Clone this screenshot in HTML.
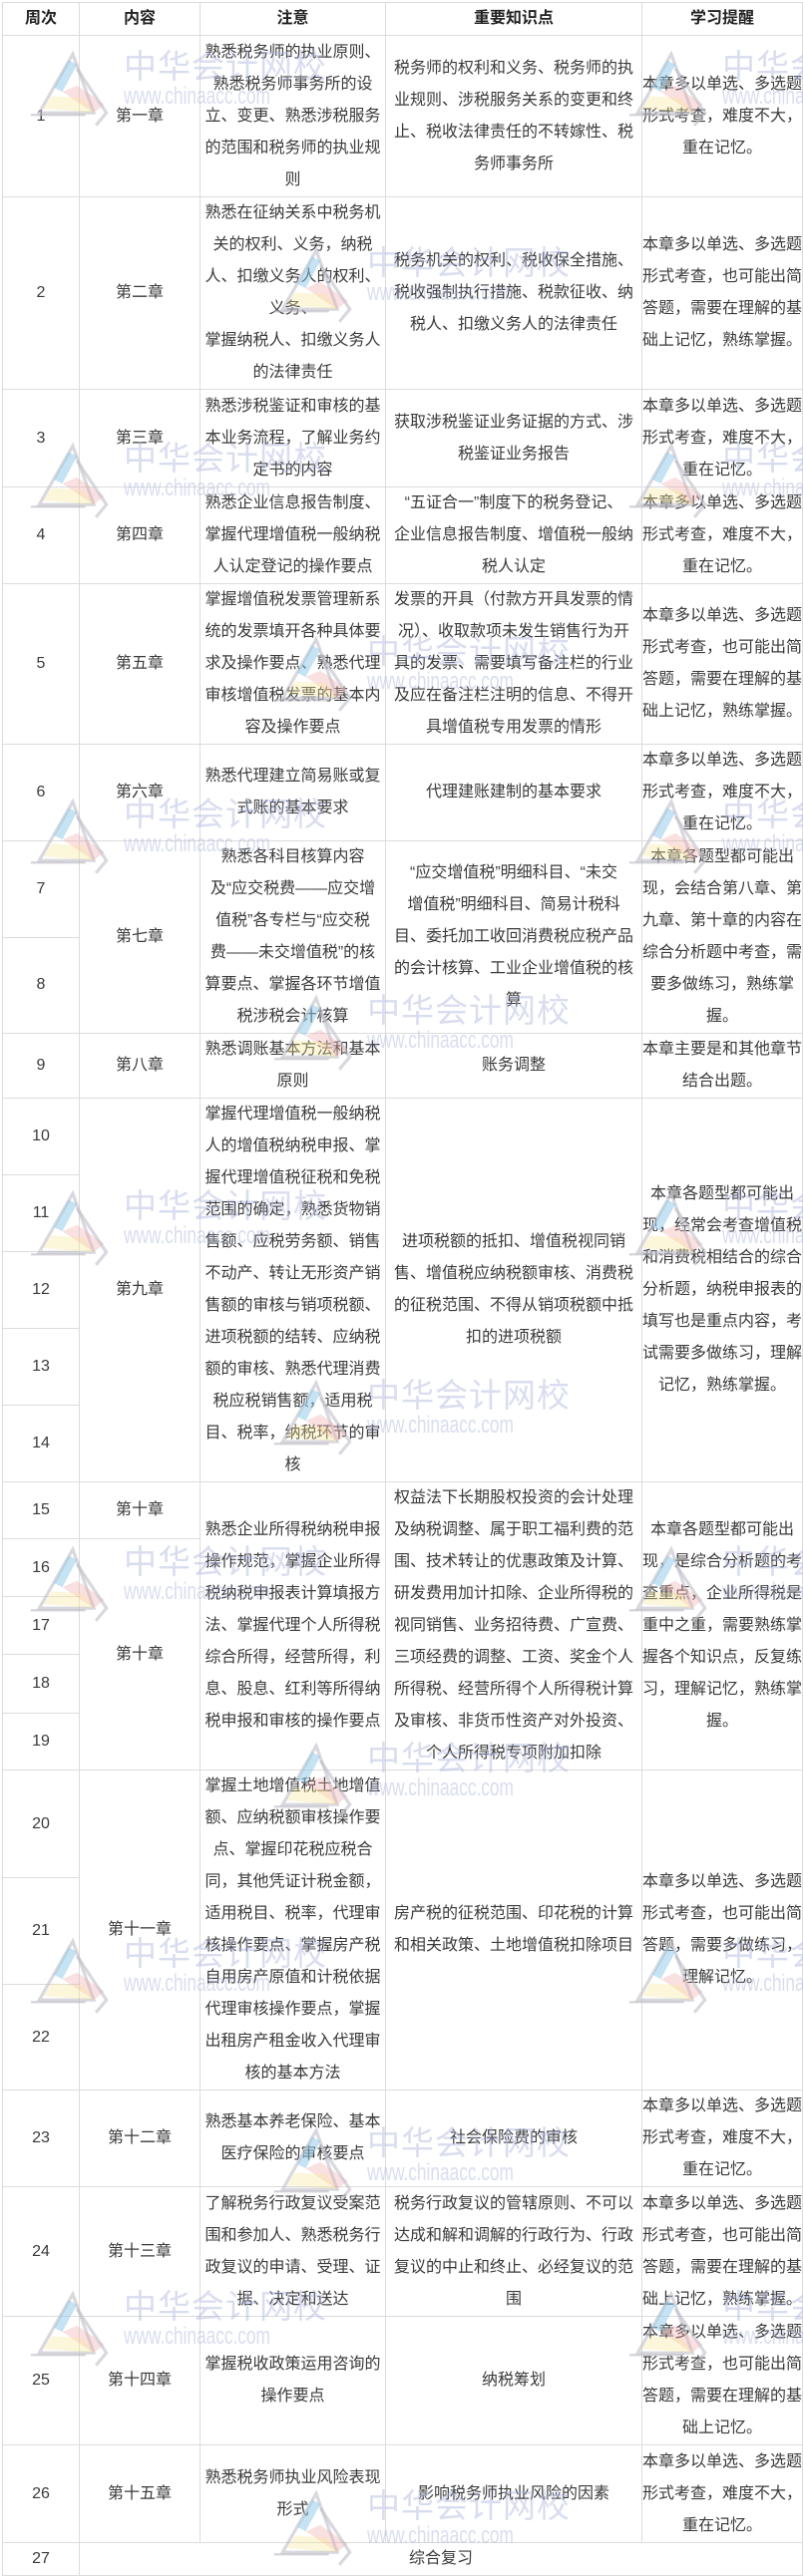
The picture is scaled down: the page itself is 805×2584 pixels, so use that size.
<!DOCTYPE html>
<html><head><meta charset="utf-8">
<style>
html,body{margin:0;padding:0;background:#fff;}
body{width:805px;height:2582px;position:relative;overflow:hidden;font-family:"Liberation Sans","Noto Sans CJK SC",sans-serif;}
table{position:absolute;left:2px;top:2px;width:802px;border-collapse:collapse;table-layout:fixed;color:#3a3a3a;font-size:16px;}
td,th{border:1px solid #dcdcdc;padding:0;text-align:center;vertical-align:middle;line-height:32px;white-space:nowrap;overflow:hidden;}
th{font-weight:bold;color:#222;}
.wm{position:absolute;width:320px;height:80px;pointer-events:none;z-index:5;}
.wm .t{position:absolute;left:96px;top:-4px;font-size:33px;line-height:36px;color:rgba(170,180,220,0.45);letter-spacing:1px;white-space:nowrap;font-family:"Noto Sans CJK SC",sans-serif;}
.wm .u{position:absolute;left:96px;top:34px;font-size:24px;line-height:26px;color:rgba(170,180,220,0.45);white-space:nowrap;transform:scaleX(0.72);transform-origin:left top;font-family:"Liberation Sans",sans-serif;}
.wm svg{position:absolute;left:-96px;top:0;}
</style></head><body>
<table>
<colgroup><col style="width:77px"><col style="width:121px"><col style="width:186px"><col style="width:257px"><col style="width:161px"></colgroup>
<tr style="height:33px"><th>周次</th><th>内容</th><th>注意</th><th>重要知识点</th><th>学习提醒</th></tr>
<tr style="height:162px"><td>1</td><td>第一章</td><td>熟悉税务师的执业原则、<br>熟悉税务师事务所的设<br>立、变更、熟悉涉税服务<br>的范围和税务师的执业规<br>则</td><td>税务师的权利和义务、税务师的执<br>业规则、涉税服务关系的变更和终<br>止、税收法律责任的不转嫁性、税<br>务师事务所</td><td>本章多以单选、多选题<br>形式考查，难度不大，<br>重在记忆。</td></tr>
<tr style="height:192px"><td>2</td><td>第二章</td><td>熟悉在征纳关系中税务机<br>关的权利、义务，纳税<br>人、扣缴义务人的权利、<br>义务、<br>掌握纳税人、扣缴义务人<br>的法律责任</td><td>税务机关的权利、税收保全措施、<br>税收强制执行措施、税款征收、纳<br>税人、扣缴义务人的法律责任</td><td>本章多以单选、多选题<br>形式考查，也可能出简<br>答题，需要在理解的基<br>础上记忆，熟练掌握。</td></tr>
<tr style="height:98px"><td>3</td><td>第三章</td><td>熟悉涉税鉴证和审核的基<br>本业务流程，了解业务约<br>定书的内容</td><td>获取涉税鉴证业务证据的方式、涉<br>税鉴证业务报告</td><td>本章多以单选、多选题<br>形式考查，难度不大，<br>重在记忆。</td></tr>
<tr style="height:96px"><td>4</td><td>第四章</td><td>熟悉企业信息报告制度、<br>掌握代理增值税一般纳税<br>人认定登记的操作要点</td><td>“五证合一”制度下的税务登记、<br>企业信息报告制度、增值税一般纳<br>税人认定</td><td>本章多以单选、多选题<br>形式考查，难度不大，<br>重在记忆。</td></tr>
<tr style="height:161px"><td>5</td><td>第五章</td><td>掌握增值税发票管理新系<br>统的发票填开各种具体要<br>求及操作要点、熟悉代理<br>审核增值税发票的基本内<br>容及操作要点</td><td>发票的开具（付款方开具发票的情<br>况）、收取款项未发生销售行为开<br>具的发票、需要填写备注栏的行业<br>及应在备注栏注明的信息、不得开<br>具增值税专用发票的情形</td><td>本章多以单选、多选题<br>形式考查，也可能出简<br>答题，需要在理解的基<br>础上记忆，熟练掌握。</td></tr>
<tr style="height:97px"><td>6</td><td>第六章</td><td>熟悉代理建立简易账或复<br>式账的基本要求</td><td>代理建账建制的基本要求</td><td>本章多以单选、多选题<br>形式考查，难度不大，<br>重在记忆。</td></tr>
<tr style="height:96px"><td>7</td><td rowspan="2">第七章</td><td rowspan="2">熟悉各科目核算内容<br>及“应交税费——应交增<br>值税”各专栏与“应交税<br>费——未交增值税”的核<br>算要点、掌握各环节增值<br>税涉税会计核算</td><td rowspan="2">“应交增值税”明细科目、“未交<br>增值税”明细科目、简易计税科<br>目、委托加工收回消费税应税产品<br>的会计核算、工业企业增值税的核<br>算</td><td rowspan="2">本章各题型都可能出<br>现，会结合第八章、第<br>九章、第十章的内容在<br>综合分析题中考查，需<br>要多做练习，熟练掌<br>握。</td></tr>
<tr style="height:96px"><td>8</td></tr>
<tr style="height:65px"><td>9</td><td>第八章</td><td>熟悉调账基本方法和基本<br>原则</td><td>账务调整</td><td>本章主要是和其他章节<br>结合出题。</td></tr>
<tr style="height:77px"><td>10</td><td rowspan="5">第九章</td><td rowspan="5">掌握代理增值税一般纳税<br>人的增值税纳税申报、掌<br>握代理增值税征税和免税<br>范围的确定，熟悉货物销<br>售额、应税劳务额、销售<br>不动产、转让无形资产销<br>售额的审核与销项税额、<br>进项税额的结转、应纳税<br>额的审核、熟悉代理消费<br>税应税销售额，适用税<br>目、税率，纳税环节的审<br>核</td><td rowspan="5">进项税额的抵扣、增值税视同销<br>售、增值税应纳税额审核、消费税<br>的征税范围、不得从销项税额中抵<br>扣的进项税额</td><td rowspan="5">本章各题型都可能出<br>现，经常会考查增值税<br>和消费税相结合的综合<br>分析题，纳税申报表的<br>填写也是重点内容，考<br>试需要多做练习，理解<br>记忆，熟练掌握。</td></tr>
<tr style="height:77px"><td>11</td></tr>
<tr style="height:77px"><td>12</td></tr>
<tr style="height:77px"><td>13</td></tr>
<tr style="height:77px"><td>14</td></tr>
<tr style="height:57px"><td>15</td><td>第十章</td><td rowspan="5">熟悉企业所得税纳税申报<br>操作规范，掌握企业所得<br>税纳税申报表计算填报方<br>法、掌握代理个人所得税<br>综合所得，经营所得，利<br>息、股息、红利等所得纳<br>税申报和审核的操作要点</td><td rowspan="5">权益法下长期股权投资的会计处理<br>及纳税调整、属于职工福利费的范<br>围、技术转让的优惠政策及计算、<br>研发费用加计扣除、企业所得税的<br>视同销售、业务招待费、广宣费、<br>三项经费的调整、工资、奖金个人<br>所得税、经营所得个人所得税计算<br>及审核、非货币性资产对外投资、<br>个人所得税专项附加扣除</td><td rowspan="5">本章各题型都可能出<br>现，是综合分析题的考<br>查重点，企业所得税是<br>重中之重，需要熟练掌<br>握各个知识点，反复练<br>习，理解记忆，熟练掌<br>握。</td></tr>
<tr style="height:58px"><td>16</td><td rowspan="4">第十章</td></tr>
<tr style="height:58px"><td>17</td></tr>
<tr style="height:59px"><td>18</td></tr>
<tr style="height:57px"><td>19</td></tr>
<tr style="height:108px"><td>20</td><td rowspan="3">第十一章</td><td rowspan="3">掌握土地增值税土地增值<br>额、应纳税额审核操作要<br>点、掌握印花税应税合<br>同，其他凭证计税金额，<br>适用税目、税率，代理审<br>核操作要点、掌握房产税<br>自用房产原值和计税依据<br>代理审核操作要点，掌握<br>出租房产租金收入代理审<br>核的基本方法</td><td rowspan="3">房产税的征税范围、印花税的计算<br>和相关政策、土地增值税扣除项目</td><td rowspan="3">本章多以单选、多选题<br>形式考查，也可能出简<br>答题，需要多做练习，<br>理解记忆。</td></tr>
<tr style="height:107px"><td>21</td></tr>
<tr style="height:106px"><td>22</td></tr>
<tr style="height:97px"><td>23</td><td>第十二章</td><td>熟悉基本养老保险、基本<br>医疗保险的审核要点</td><td>社会保险费的审核</td><td>本章多以单选、多选题<br>形式考查，难度不大，<br>重在记忆。</td></tr>
<tr style="height:130px"><td>24</td><td>第十三章</td><td>了解税务行政复议受案范<br>围和参加人、熟悉税务行<br>政复议的申请、受理、证<br>据、决定和送达</td><td>税务行政复议的管辖原则、不可以<br>达成和解和调解的行政行为、行政<br>复议的中止和终止、必经复议的范<br>围</td><td>本章多以单选、多选题<br>形式考查，也可能出简<br>答题，需要在理解的基<br>础上记忆，熟练掌握。</td></tr>
<tr style="height:128px"><td>25</td><td>第十四章</td><td>掌握税收政策运用咨询的<br>操作要点</td><td>纳税筹划</td><td>本章多以单选、多选题<br>形式考查，也可能出简<br>答题，需要在理解的基<br>础上记忆。</td></tr>
<tr style="height:98px"><td>26</td><td>第十五章</td><td>熟悉税务师执业风险表现<br>形式</td><td>影响税务师执业风险的因素</td><td>本章多以单选、多选题<br>形式考查，难度不大，<br>重在记忆。</td></tr>
<tr style="height:32px"><td>27</td><td colspan="4">综合复习</td></tr>
</table>

<svg width="0" height="0" style="position:absolute"><defs>
<g id="logo">
<path d="M40 4 L8 60 L60 60 Z" fill="none" stroke="rgba(190,190,200,0.6)" stroke-width="3"/>
<path d="M36 10 L44 14 L30 40 L22 36 Z" fill="rgba(140,200,230,0.5)"/>
<path d="M30 40 L60 60 L70 52 L44 34 Z" fill="rgba(240,170,170,0.35)"/>
<path d="M12 56 L60 60 L50 46 L20 44 Z" fill="rgba(245,230,150,0.35)"/>
<path d="M0 62 L52 62" stroke="rgba(180,180,190,0.6)" stroke-width="2"/>
<path d="M44 18 L72 60 L62 72" fill="none" stroke="rgba(190,190,200,0.6)" stroke-width="3"/>
</g></defs></svg>

<div class="wm" style="left:124px;top:50px"><svg width="90" height="80" viewBox="0 0 80 76"><use href="#logo"/></svg><div class="t" style="left:0">中华会计网校</div><div class="u" style="left:0">www.chinaacc.com</div></div>
<div class="wm" style="left:368px;top:247px"><svg width="90" height="80" viewBox="0 0 80 76"><use href="#logo"/></svg><div class="t" style="left:0">中华会计网校</div><div class="u" style="left:0">www.chinaacc.com</div></div>
<div class="wm" style="left:724px;top:50px"><svg width="90" height="80" viewBox="0 0 80 76"><use href="#logo"/></svg><div class="t" style="left:0">中华会计网校</div><div class="u" style="left:0">www.chinaacc.com</div></div>
<div class="wm" style="left:124px;top:443px"><svg width="90" height="80" viewBox="0 0 80 76"><use href="#logo"/></svg><div class="t" style="left:0">中华会计网校</div><div class="u" style="left:0">www.chinaacc.com</div></div>
<div class="wm" style="left:724px;top:443px"><svg width="90" height="80" viewBox="0 0 80 76"><use href="#logo"/></svg><div class="t" style="left:0">中华会计网校</div><div class="u" style="left:0">www.chinaacc.com</div></div>
<div class="wm" style="left:368px;top:637px"><svg width="90" height="80" viewBox="0 0 80 76"><use href="#logo"/></svg><div class="t" style="left:0">中华会计网校</div><div class="u" style="left:0">www.chinaacc.com</div></div>
<div class="wm" style="left:124px;top:800px"><svg width="90" height="80" viewBox="0 0 80 76"><use href="#logo"/></svg><div class="t" style="left:0">中华会计网校</div><div class="u" style="left:0">www.chinaacc.com</div></div>
<div class="wm" style="left:724px;top:800px"><svg width="90" height="80" viewBox="0 0 80 76"><use href="#logo"/></svg><div class="t" style="left:0">中华会计网校</div><div class="u" style="left:0">www.chinaacc.com</div></div>
<div class="wm" style="left:368px;top:997px"><svg width="90" height="80" viewBox="0 0 80 76"><use href="#logo"/></svg><div class="t" style="left:0">中华会计网校</div><div class="u" style="left:0">www.chinaacc.com</div></div>
<div class="wm" style="left:124px;top:1193px"><svg width="90" height="80" viewBox="0 0 80 76"><use href="#logo"/></svg><div class="t" style="left:0">中华会计网校</div><div class="u" style="left:0">www.chinaacc.com</div></div>
<div class="wm" style="left:724px;top:1193px"><svg width="90" height="80" viewBox="0 0 80 76"><use href="#logo"/></svg><div class="t" style="left:0">中华会计网校</div><div class="u" style="left:0">www.chinaacc.com</div></div>
<div class="wm" style="left:368px;top:1383px"><svg width="90" height="80" viewBox="0 0 80 76"><use href="#logo"/></svg><div class="t" style="left:0">中华会计网校</div><div class="u" style="left:0">www.chinaacc.com</div></div>
<div class="wm" style="left:124px;top:1550px"><svg width="90" height="80" viewBox="0 0 80 76"><use href="#logo"/></svg><div class="t" style="left:0">中华会计网校</div><div class="u" style="left:0">www.chinaacc.com</div></div>
<div class="wm" style="left:724px;top:1550px"><svg width="90" height="80" viewBox="0 0 80 76"><use href="#logo"/></svg><div class="t" style="left:0">中华会计网校</div><div class="u" style="left:0">www.chinaacc.com</div></div>
<div class="wm" style="left:368px;top:1747px"><svg width="90" height="80" viewBox="0 0 80 76"><use href="#logo"/></svg><div class="t" style="left:0">中华会计网校</div><div class="u" style="left:0">www.chinaacc.com</div></div>
<div class="wm" style="left:124px;top:1943px"><svg width="90" height="80" viewBox="0 0 80 76"><use href="#logo"/></svg><div class="t" style="left:0">中华会计网校</div><div class="u" style="left:0">www.chinaacc.com</div></div>
<div class="wm" style="left:724px;top:1943px"><svg width="90" height="80" viewBox="0 0 80 76"><use href="#logo"/></svg><div class="t" style="left:0">中华会计网校</div><div class="u" style="left:0">www.chinaacc.com</div></div>
<div class="wm" style="left:368px;top:2133px"><svg width="90" height="80" viewBox="0 0 80 76"><use href="#logo"/></svg><div class="t" style="left:0">中华会计网校</div><div class="u" style="left:0">www.chinaacc.com</div></div>
<div class="wm" style="left:124px;top:2297px"><svg width="90" height="80" viewBox="0 0 80 76"><use href="#logo"/></svg><div class="t" style="left:0">中华会计网校</div><div class="u" style="left:0">www.chinaacc.com</div></div>
<div class="wm" style="left:724px;top:2297px"><svg width="90" height="80" viewBox="0 0 80 76"><use href="#logo"/></svg><div class="t" style="left:0">中华会计网校</div><div class="u" style="left:0">www.chinaacc.com</div></div>
<div class="wm" style="left:368px;top:2497px"><svg width="90" height="80" viewBox="0 0 80 76"><use href="#logo"/></svg><div class="t" style="left:0">中华会计网校</div><div class="u" style="left:0">www.chinaacc.com</div></div>
</body></html>
